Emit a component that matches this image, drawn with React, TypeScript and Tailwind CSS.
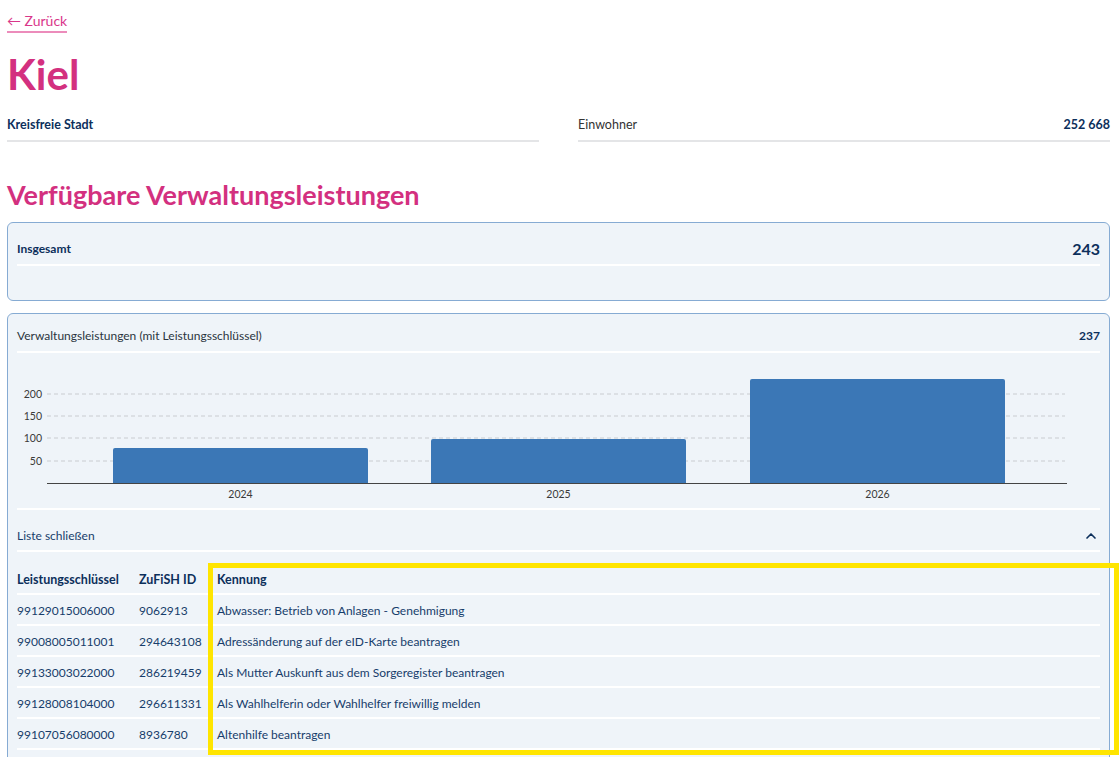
import { ChevronUp } from "lucide-react"

const rows = [
  { key: "99129015006000", id: "9062913", name: "Abwasser: Betrieb von Anlagen - Genehmigung" },
  { key: "99008005011001", id: "294643108", name: "Adressänderung auf der eID-Karte beantragen" },
  { key: "99133003022000", id: "286219459", name: "Als Mutter Auskunft aus dem Sorgeregister beantragen" },
  { key: "99128008104000", id: "296611331", name: "Als Wahlhelferin oder Wahlhelfer freiwillig melden" },
  { key: "99107056080000", id: "8936780", name: "Altenhilfe beantragen" },
]

const bars = [
  { year: "2024", x: 96, top: 95 },
  { year: "2025", x: 414, top: 86 },
  { year: "2026", x: 733, top: 26 },
]

function Chart() {
  const grid = [
    { label: "200", y: 41 },
    { label: "150", y: 63 },
    { label: "100", y: 85 },
    { label: "50", y: 108 },
  ]
  return (
    <svg viewBox="0 0 1083 155" className="block w-full h-[155px]">
      {grid.map((g) => (
        <g key={g.label}>
          <line x1={30} x2={1048} y1={g.y} y2={g.y} stroke="#c9ccd0" strokeWidth={1} strokeDasharray="4 3" />
          <text x={25} y={g.y + 3.5} textAnchor="end" fontSize={10.5} fill="#3a3a3a" fontFamily="Lato, sans-serif">
            {g.label}
          </text>
        </g>
      ))}
      {bars.map((b) => (
        <g key={b.year}>
          <path
            d={`M${b.x} 130 V${b.top + 2} Q${b.x} ${b.top} ${b.x + 2} ${b.top} H${b.x + 253} Q${b.x + 255} ${b.top} ${b.x + 255} ${b.top + 2} V130 Z`}
            fill="#3b77b6"
          />
          <text x={b.x + 127.5} y={145} textAnchor="middle" fontSize={10.5} fill="#3a3a3a" fontFamily="Lato, sans-serif">
            {b.year}
          </text>
        </g>
      ))}
      <line x1={30} x2={1050} y1={130.5} y2={130.5} stroke="#444" strokeWidth={1} />
    </svg>
  )
}

export default function App() {
  return (
    <div className="relative h-[757px] overflow-hidden bg-white pl-[7px] pr-[10px] font-['Lato',sans-serif] text-[#0c2f5b]">
      <div className="flex pt-[12px]">
        <a className="border-b-2 border-[#ec8cbb] pb-[1px] text-[14px] leading-[18px] text-[#d9368a]">← Zurück</a>
      </div>

      <h1 className="mt-[20px] text-[42px] font-bold leading-[42px] text-[#d3307f]">Kiel</h1>

      <div className="mt-[21px] grid grid-cols-2 gap-[39px]">
        <div className="border-b-2 border-[#e4e5e7] pb-[6px] text-[12.5px] font-bold leading-[18px]">Kreisfreie Stadt</div>
        <div className="flex justify-between border-b-2 border-[#e4e5e7] pb-[6px] text-[12.5px] leading-[18px]">
          <span className="text-[#333]">Einwohner</span>
          <span className="font-bold">252 668</span>
        </div>
      </div>

      <h2 className="mt-[37px] text-[27px] font-bold leading-[32px] text-[#d3307f]">Verfügbare Verwaltungsleistungen</h2>

      <div className="mt-[11px] h-[79px] rounded-[6px] border border-[#86abd3] bg-[#eff4f9] px-[9px]">
        <div className="flex items-center justify-between border-b-2 border-white pt-[16px] pb-[5px]">
          <span className="text-[12px] font-bold leading-[20px]">Insgesamt</span>
          <span className="text-[16px] font-bold leading-[20px]">243</span>
        </div>
      </div>

      <div className="mt-[12px] rounded-[6px] border border-[#86abd3] bg-[#eff4f9] px-[9px] pb-[30px]">
        <div className="flex items-center justify-between border-b-2 border-white pt-[13px] pb-[6px] text-[12px] leading-[18px]">
          <span className="text-[#2b3440]">Verwaltungsleistungen (mit Leistungsschlüssel)</span>
          <span className="font-bold">237</span>
        </div>

        <div className="border-b-2 border-white">
          <Chart />
        </div>

        <div className="flex items-center justify-between border-b-2 border-white pt-[17px] pb-[5px] text-[12px] leading-[18px]">
          <span className="text-[#173d6b]">Liste schließen</span>
          <ChevronUp size={16} strokeWidth={2.5} className="mr-[1px] text-[#0c2f5b]" />
        </div>

        <table className="mt-[19px] w-full text-left text-[12px] leading-[18px]">
          <thead>
            <tr className="border-b-2 border-white text-[12.5px]">
              <th className="w-[122px] pb-[4px] font-bold">Leistungsschlüssel</th>
              <th className="w-[78px] pb-[4px] font-bold">ZuFiSH ID</th>
              <th className="pb-[4px] font-bold">Kennung</th>
            </tr>
          </thead>
          <tbody className="text-[#173d6b]">
            {rows.map((r) => (
              <tr key={r.key} className="border-b-2 border-white">
                <td className="pt-[7px] pb-[4px]">{r.key}</td>
                <td className="pt-[7px] pb-[4px]">{r.id}</td>
                <td className="pt-[7px] pb-[4px]">{r.name}</td>
              </tr>
            ))}
          </tbody>
        </table>
      </div>

      <div className="pointer-events-none absolute left-[208px] top-[563px] h-[192px] w-[911px] border-[5px] border-[#ffe500]" />
    </div>
  )
}
